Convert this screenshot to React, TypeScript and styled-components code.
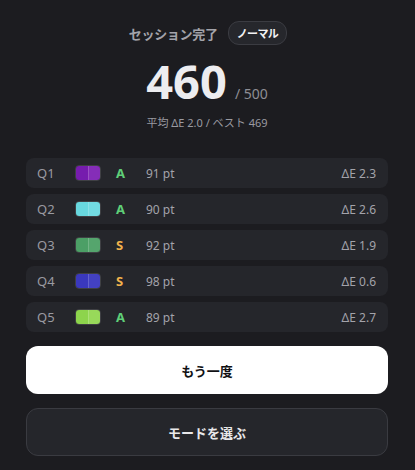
import type { FC } from "react";
import styled, { createGlobalStyle } from "styled-components";

const GlobalStyle = createGlobalStyle`
  html, body {
    margin: 0;
    padding: 0;
    background: #1c1c20;
  }
  body {
    font-family: "Noto Sans", "Noto Sans CJK JP", sans-serif;
    color: #e8e8ea;
  }
`;

type Result = {
  q: string;
  target: string;
  answer: string;
  grade: "S" | "A";
  pt: number;
  de: string;
};

const results: Result[] = [
  { q: "Q1", target: "#761cae", answer: "#852db8", grade: "A", pt: 91, de: "2.3" },
  { q: "Q2", target: "#68d8df", answer: "#72dbe2", grade: "A", pt: 90, de: "2.6" },
  { q: "Q3", target: "#4c9f66", answer: "#55a56d", grade: "S", pt: 92, de: "1.9" },
  { q: "Q4", target: "#3a38bd", answer: "#4341c2", grade: "S", pt: 98, de: "0.6" },
  { q: "Q5", target: "#8dd44c", answer: "#98d95a", grade: "A", pt: 89, de: "2.7" },
];

const App: FC = () => {
  return (
    <Page>
      <GlobalStyle />
      <Header>
        <Title>セッション完了</Title>
        <Badge>ノーマル</Badge>
      </Header>
      <ScoreLine>
        <Score>460</Score>
        <Max>/ 500</Max>
      </ScoreLine>
      <Summary>平均 ΔE 2.0 / ベスト 469</Summary>
      <List>
        {results.map((r) => (
          <Row key={r.q}>
            <QLabel>{r.q}</QLabel>
            <Swatch>
              <Half $color={r.target} />
              <Half $color={r.answer} />
            </Swatch>
            <Grade $grade={r.grade}>{r.grade}</Grade>
            <Points>{r.pt} pt</Points>
            <Delta>ΔE {r.de}</Delta>
          </Row>
        ))}
      </List>
      <Actions>
        <PrimaryButton>もう一度</PrimaryButton>
        <SecondaryButton>モードを選ぶ</SecondaryButton>
      </Actions>
    </Page>
  );
};

export default App;

const Page = styled.div`
  width: 415px;
  height: 470px;
  box-sizing: border-box;
  padding: 21px 27px 0 26px;
  display: flex;
  flex-direction: column;
  align-items: center;
  background: #1c1c20;
`;

const Header = styled.div`
  display: flex;
  align-items: center;
  gap: 10px;
  height: 24px;
  margin-left: 2px;
`;

const Title = styled.div`
  font-size: 13px;
  font-weight: 700;
  color: #a3a3aa;
  letter-spacing: -0.3px;
`;

const Badge = styled.div`
  height: 22px;
  padding: 0 8px;
  display: flex;
  align-items: center;
  border-radius: 11px;
  border: 1px solid #3b3c42;
  background: #26272c;
  font-size: 11px;
  font-weight: 700;
  letter-spacing: -0.6px;
  color: #f2f2f4;
`;

const ScoreLine = styled.div`
  display: flex;
  align-items: baseline;
  gap: 8px;
  margin-top: 8px;
  height: 56px;
`;

const Score = styled.div`
  font-size: 47px;
  font-weight: 700;
  color: #ededf0;
  line-height: 56px;
`;

const Max = styled.div`
  font-size: 14px;
  color: #8e8e95;
`;

const Summary = styled.div`
  margin-top: 5px;
  font-size: 11px;
  color: #9a9aa1;
`;

const List = styled.div`
  margin-top: 28px;
  width: 100%;
  display: flex;
  flex-direction: column;
  gap: 6px;
`;

const Row = styled.div`
  height: 30px;
  border-radius: 8px;
  background: #25262b;
  display: flex;
  align-items: center;
  padding: 0 12px 0 11px;
  font-size: 12px;
`;

const QLabel = styled.div`
  width: 38px;
  color: #9a9aa1;
  font-size: 13px;
`;

const Swatch = styled.div`
  width: 26px;
  height: 16px;
  border-radius: 4px;
  overflow: hidden;
  display: flex;
  border: 1px solid rgba(255, 255, 255, 0.12);
  box-sizing: border-box;
`;

const Half = styled.div<{ $color: string }>`
  flex: 1;
  background: ${(p) => p.$color};
  & + & {
    border-left: 1px solid rgba(255, 255, 255, 0.18);
  }
`;

const Grade = styled.div<{ $grade: "S" | "A" }>`
  width: 30px;
  margin-left: 15px;
  font-size: 13px;
  font-weight: 700;
  color: ${(p) => (p.$grade === "S" ? "#f2b24c" : "#5fcf78")};
`;

const Points = styled.div`
  flex: 1;
  color: #a3a3aa;
`;

const Delta = styled.div`
  color: #a3a3aa;
`;

const Actions = styled.div`
  margin-top: 14px;
  width: 100%;
  display: flex;
  flex-direction: column;
  gap: 14px;
`;

const BaseButton = styled.button`
  height: 48px;
  width: 100%;
  border-radius: 12px;
  font-family: "Noto Sans CJK JP", sans-serif;
  font-size: 13px;
  font-weight: 700;
  cursor: pointer;
`;

const PrimaryButton = styled(BaseButton)`
  background: #ffffff;
  color: #111114;
  border: none;
`;

const SecondaryButton = styled(BaseButton)`
  background: #25262b;
  color: #e8e8ea;
  border: 1px solid #3a3b41;
`;
